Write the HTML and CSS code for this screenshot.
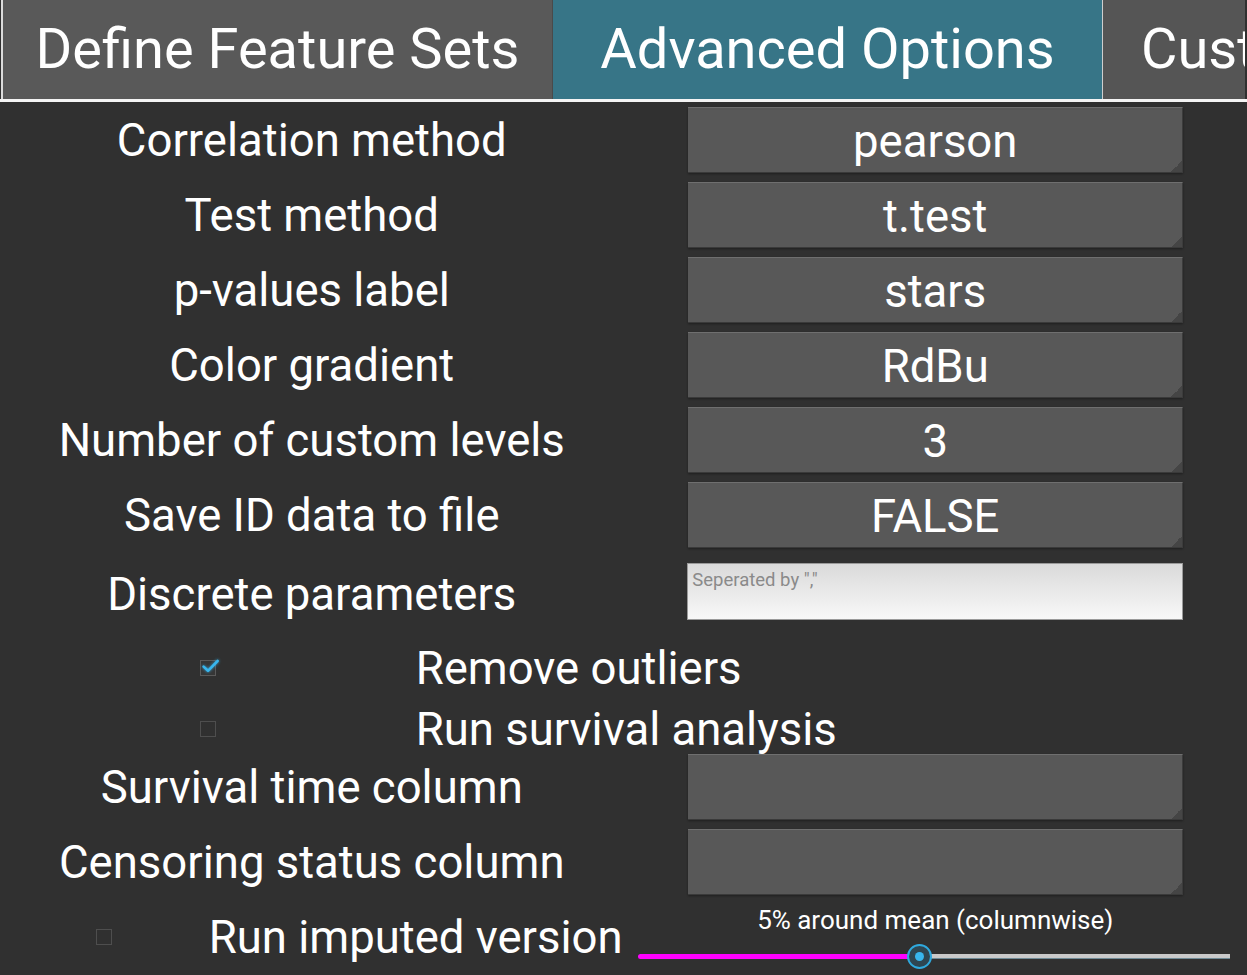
FILE: index.html
```html
<!DOCTYPE html>
<html lang="en">
<head>
<meta charset="utf-8">
<title>Advanced Options</title>
<link rel="stylesheet" href="styles.css">
</head>
<body>
<div class="tabs">
  <div class="tab tab-first">Define Feature Sets</div>
  <div class="tab tab-active">Advanced Options</div>
  <div class="tab tab-last">Custom Parameters</div>
</div>
<div class="panel">
  <div class="row"><div class="label">Correlation method</div><div class="field"><div class="select">pearson</div></div></div>
  <div class="row"><div class="label">Test method</div><div class="field"><div class="select">t.test</div></div></div>
  <div class="row"><div class="label">p-values label</div><div class="field"><div class="select">stars</div></div></div>
  <div class="row"><div class="label">Color gradient</div><div class="field"><div class="select">RdBu</div></div></div>
  <div class="row"><div class="label">Number of custom levels</div><div class="field"><div class="select">3</div></div></div>
  <div class="row"><div class="label">Save ID data to file</div><div class="field"><div class="select">FALSE</div></div></div>
  <div class="row row-input"><div class="label">Discrete parameters</div><div class="field field-top"><textarea class="textbox" placeholder='Seperated by ","'></textarea></div></div>
  <div class="check-row">
    <div class="cb-cell"><span class="cb cb-checked"><svg class="tick" viewBox="0 0 16 16" width="16" height="16"><path d="M3.6 6.6 L8 10.8 L17.6 1" fill="none" stroke="#38b6ee" stroke-width="2.6" stroke-linecap="round" stroke-linejoin="round"/></svg></span></div>
    <div class="check-label">Remove outliers</div>
  </div>
  <div class="check-row check-row-last">
    <div class="cb-cell"><span class="cb"></span></div>
    <div class="check-label">Run survival analysis</div>
  </div>
  <div class="row"><div class="label">Survival time column</div><div class="field"><div class="select"></div></div></div>
  <div class="row"><div class="label">Censoring status column</div><div class="field"><div class="select"></div></div></div>
  <div class="bottom-row">
    <div class="cb-cell"><span class="cb"></span></div>
    <div class="label">Run imputed version</div>
    <div class="slider">
      <div class="slider-label">5% around mean (columnwise)</div>
      <div class="track">
        <div class="track-fill" style="width: 47.6%"></div>
        <div class="track-rest"></div>
        <div class="thumb" style="left: 47.6%"><span class="thumb-dot"></span></div>
      </div>
    </div>
  </div>
</div>
</body>
</html>
```
FILE: styles.css
```css
html, body {
  margin: 0;
  padding: 0;
  width: 1247px;
  height: 975px;
  overflow: hidden;
  background: #303030;
  font-family: Roboto, "Noto Sans", sans-serif;
  color: #ffffff;
}

.tabs {
  display: flex;
  height: 99px;
  border-bottom: 3px solid #f4f4f4;
  padding-left: 1px;
  white-space: nowrap;
  overflow: hidden;
}

.tab {
  flex: 0 0 550px;
  box-sizing: border-box;
  height: 99px;
  background: #595959;
  font-size: 56px;
  display: flex;
  align-items: center;
  justify-content: center;
  padding-bottom: 2px;
}

.tab-first {
  flex-basis: 551px;
  border-left: 2px solid #dcdcdc;
}

.tab-active {
  background: #377587;
  border-left: 1px solid #4a4a4a;
}

.tab-last {
  flex: 0 0 143px;
  background: #555555;
  border-left: 1px solid #cfcfcf;
  justify-content: flex-start;
  padding-left: 38px;
  overflow: hidden;
}

.panel {
  display: flex;
  flex-direction: column;
}

.row {
  display: grid;
  grid-template-columns: 1fr 1fr;
  height: 75px;
  align-items: center;
}

.label {
  text-align: center;
  font-size: 45.5px;
  line-height: 54px;
  padding-top: 3px;
}

.field {
  display: flex;
  justify-content: center;
}

.select {
  position: relative;
  box-sizing: border-box;
  width: 495px;
  height: 66px;
  background: #585858;
  border-top: 1px solid #6f6f6f;
  border-right: 1px solid #3c3c3c;
  border-bottom: 1px solid #3a3a3a;
  box-shadow: 0 1px 2px rgba(0, 0, 0, 0.35);
  font-size: 45.5px;
  line-height: 62px;
  padding-top: 3px;
  text-align: center;
  padding-left: 1px;
}

.select::after {
  content: "";
  position: absolute;
  right: 0;
  bottom: 0;
  width: 11px;
  height: 11px;
  background: linear-gradient(135deg, transparent 50%, #454545 50%);
}

.row-input {
  height: 86px;
  align-items: start;
}

.row-input .label {
  align-self: center;
  padding-top: 0;
}

.field-top {
  padding-top: 11px;
}

.textbox {
  box-sizing: border-box;
  width: 496px;
  height: 57px;
  margin: 0;
  border: 1px solid #9a9a9a;
  background: linear-gradient(180deg, #dadada 0%, #ececec 60%, #f8f8f8 100%);
  font-family: Roboto, "Noto Sans", sans-serif;
  font-size: 18.5px;
  padding: 5px 4px;
  resize: none;
  color: #333;
}

.textbox::placeholder {
  color: #8a8a8a;
}

.check-row {
  display: grid;
  grid-template-columns: 1fr 2fr;
  box-sizing: border-box;
  height: 59px;
  align-items: center;
}

.check-row-last {
  height: 61px;
  margin-bottom: -9px;
  padding-top: 2px;
}

.cb-cell {
  display: flex;
  justify-content: center;
}

.cb {
  position: relative;
  display: block;
  box-sizing: border-box;
  width: 16px;
  height: 16px;
  border: 1px solid #4e4e4e;
}

.cb-checked {
  border-color: #5a5a5a;
  background: #363636;
}

.tick {
  position: absolute;
  left: -1px;
  top: -1px;
  overflow: visible;
  filter: drop-shadow(0 0 1.5px rgba(56, 182, 238, 0.8));
}

.check-label {
  font-size: 45.5px;
  line-height: 54px;
  padding-top: 3px;
}

.bottom-row {
  display: grid;
  grid-template-columns: 1fr 2fr 3fr;
  height: 75px;
  align-items: center;
}

.bottom-row .label {
  padding-top: 2px;
}

.slider {
  align-self: start;
  padding: 6px 17px 0 14px;
  display: flex;
  flex-direction: column;
}

.slider-label {
  font-size: 26px;
  line-height: 30px;
  text-align: center;
  padding-left: 3px;
}

.track {
  position: relative;
  display: flex;
  height: 5px;
  margin-top: 19px;
}

.track-fill {
  height: 5px;
  background: #ff00ff;
  border-radius: 3px 0 0 3px;
}

.track-rest {
  flex: 1;
  height: 4px;
  background: #c9c9c9;
  border-bottom: 1px solid #6f8a96;
}

.thumb {
  position: absolute;
  top: 50%;
  width: 25px;
  height: 25px;
  margin-left: -13px;
  margin-top: -13px;
  box-sizing: border-box;
  border: 2px solid #2fa9de;
  border-radius: 50%;
  background: #2e4652;
  display: flex;
  align-items: center;
  justify-content: center;
}

.thumb-dot {
  width: 9px;
  height: 9px;
  border-radius: 50%;
  background: #38b6ee;
}
```
